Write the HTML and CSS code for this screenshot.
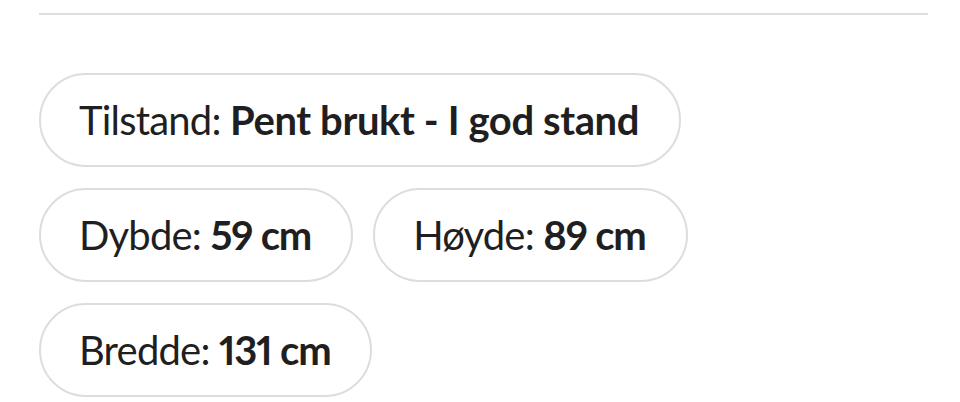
FILE: index.html
```html
<!DOCTYPE html>
<html lang="no">
<head>
<meta charset="utf-8">
<link rel="stylesheet" href="styles.css">
</head>
<body>
<div class="page">
  <div class="divider"></div>
  <div class="chips">
    <div class="chip">Tilstand: <b>Pent brukt - I god stand</b></div>
    <div class="chip">Dybde: <b class="num">59 cm</b></div>
    <div class="chip">Høyde: <b class="num">89 cm</b></div>
    <div class="chip">Bredde: <b class="num">131 cm</b></div>
  </div>
</div>
</body>
</html>
```

FILE: styles.css
```css
html, body {
  margin: 0;
  padding: 0;
  background: #ffffff;
}
.page {
  padding: 13px 32px 0 39px;
  font-family: Lato, "Noto Sans", sans-serif;
  color: #1f1f22;
}
.divider {
  height: 2px;
  background: #dedede;
  width: 889px;
}
.chips {
  margin-top: 58px;
  display: flex;
  flex-wrap: wrap;
  gap: 21px 20px;
  width: 889px;
}
.chip {
  box-sizing: border-box;
  height: 94px;
  display: flex;
  align-items: center;
  padding: 0 40px 0 38px;
  border: 2px solid #dddddd;
  border-radius: 47px;
  font-size: 40px;
  letter-spacing: -0.8px;
  white-space: pre;
}
.chip b {
  font-weight: 700;
  letter-spacing: -0.4px;
}
.chip .num {
  font-variant-numeric: proportional-nums;
  letter-spacing: -1.2px;
}
```
